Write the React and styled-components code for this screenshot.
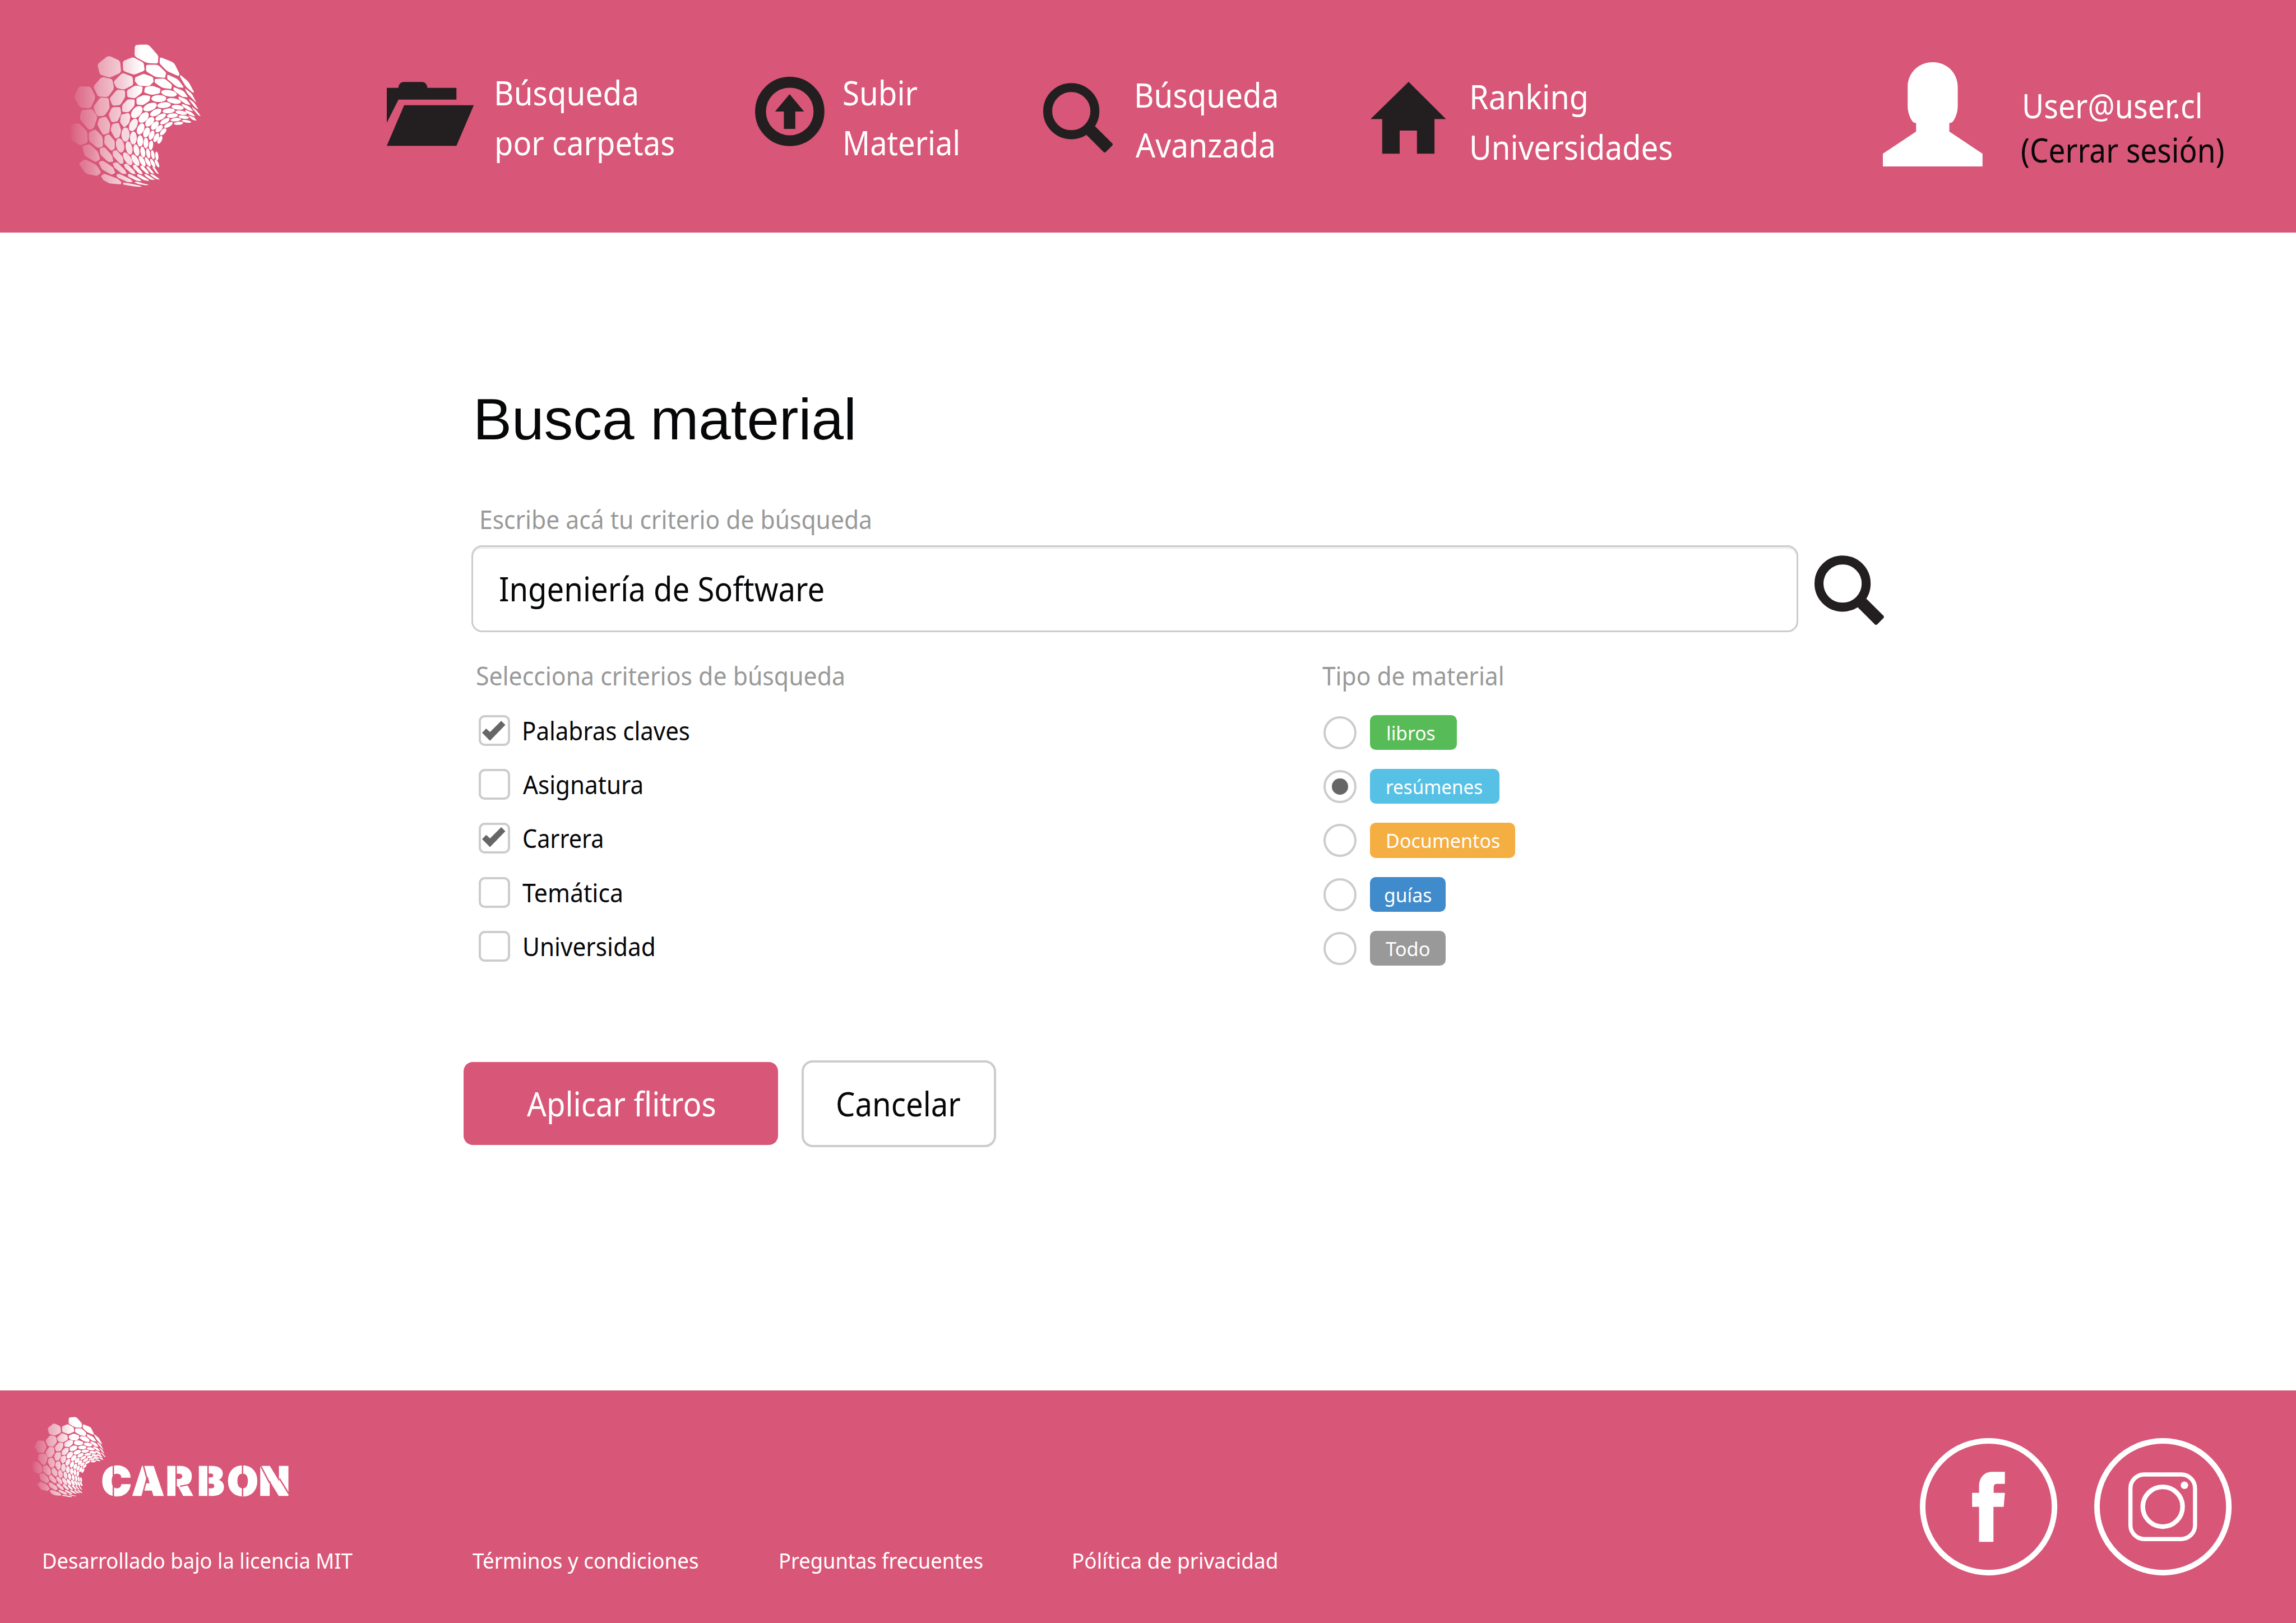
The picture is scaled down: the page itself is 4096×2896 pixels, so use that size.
import React from "react";
import styled, { createGlobalStyle } from "styled-components";

const K = 0.8256;
const u = (n) => `${(n * K).toFixed(2)}px`;

const PINK = "#d85677";
const INK = "#060709";
const ICON = "#231f20";

const GlobalStyle = createGlobalStyle`
  * { box-sizing: border-box; }
  html, body { margin: 0; padding: 0; background: #fff; }
  body { font-family: "Noto Sans", "Open Sans", sans-serif; color: ${INK}; }
`;

/* Condensed text line: $s is the horizontal stretch, $l the side bearing trimmed off. */
const T = styled.span`
  display: block;
  flex: none;
  width: ${(p) => u(p.$w)};
  margin-left: ${(p) => u((p.$dx || 0) - (p.$l || 0))};
  margin-right: ${(p) => u(p.$l || 0)};
  font-family: ${(p) => (p.$arial ? '"Liberation Sans", Arial, sans-serif' : "inherit")};
  font-size: ${(p) => u(p.$size)};
  line-height: ${(p) => u(p.$line)};
  color: ${(p) => p.$color || "inherit"};
  white-space: nowrap;
  transform: scaleX(${(p) => p.$s});
  transform-origin: 0 50%;
`;

const Page = styled.div`
  width: 4096px;
  height: 2896px;
  display: flex;
  flex-direction: column;
  overflow: hidden;
`;
const Header = styled.header`
  flex: none;
  height: ${u(503)};
  background: ${PINK};
  color: #fff;
  display: flex;
  align-items: flex-start;
`;
const Svg = styled.svg`
  display: block;
  flex: none;
  width: ${(p) => u(p.$w)};
  height: ${(p) => u(p.$h)};
  margin-top: ${(p) => u(p.$mt || 0)};
  margin-left: ${(p) => u(p.$ml || 0)};
  overflow: visible;
`;
const NavItem = styled.a`
  display: flex;
  flex: none;
  align-items: flex-start;
  margin-left: ${(p) => u(p.$ml)};
`;
const NavText = styled.div`
  flex: none;
  width: ${(p) => u(p.$w)};
  margin-left: ${(p) => u(p.$ml)};
  margin-top: ${(p) => u(p.$mt)};
`;
const Main = styled.main`
  flex: none;
  height: ${u(2502)};
  display: flex;
  flex-direction: column;
  align-items: flex-start;
`;
const Block = styled.div`
  flex: none;
  padding-left: ${(p) => u(p.$pl)};
  margin-top: ${(p) => u(p.$mt)};
`;
const FieldRow = styled.div`
  display: flex;
  align-items: flex-start;
  margin: ${u(21.2)} 0 0 ${u(1019)};
`;
const Field = styled.div`
  display: flex;
  align-items: center;
  width: ${u(2866.7)};
  height: ${u(188)};
  padding-left: ${u(60)};
  border: ${u(4.8)} solid #ccc;
  border-radius: ${u(23)};
  box-shadow: inset 0 ${u(4)} 0 #eeeff0;
`;
const Columns = styled.div`
  display: flex;
  margin-top: ${u(58.8)};
`;
const Column = styled.section`
  flex: none;
  width: ${(p) => u(p.$w)};
  margin-left: ${(p) => u(p.$ml)};
`;
const Options = styled.div`
  display: flex;
  flex-direction: column;
  gap: ${u(41.35)};
  margin: ${u(49.9)} 0 0 ${(p) => u(p.$ml)};
`;
const Option = styled.div`
  display: flex;
  align-items: flex-start;
  height: ${u(75.3)};
`;
const CheckBox = styled.span`
  flex: none;
  width: ${u(67.6)};
  height: ${u(66.7)};
  margin-right: ${u(28.5)};
  border: ${u(4.9)} solid #ccc;
  border-radius: ${u(13)};
`;
const Radio = styled.span`
  flex: none;
  display: flex;
  align-items: center;
  justify-content: center;
  width: ${u(71.3)};
  height: ${u(71.3)};
  margin: ${u(2.4)} ${u(29.3)} 0 0;
  border: ${u(4.9)} solid #ccc;
  border-radius: 50%;
`;
const Dot = styled.span`
  width: ${u(34.3)};
  height: ${u(34.3)};
  border-radius: 50%;
  background: #666;
`;
const Tag = styled.span`
  flex: none;
  display: flex;
  width: ${(p) => u(p.$w)};
  height: ${u(75.3)};
  padding-left: ${(p) => u(p.$pl)};
  border-radius: ${u(12.5)};
  background: ${(p) => p.$bg};
  color: #fff;
`;
const Buttons = styled.div`
  display: flex;
  align-items: center;
  gap: ${u(49.7)};
  margin: ${u(204)} 0 0 ${u(1002.2)};
`;
const Button = styled.div`
  flex: none;
  display: flex;
  align-items: center;
  width: ${(p) => u(p.$w)};
  height: ${(p) => u(p.$h)};
  padding-left: ${(p) => u(p.$pl)};
  border: ${(p) => (p.$primary ? "0" : `${u(4.9)} solid #ccc`)};
  border-radius: ${(p) => u(p.$primary ? 20 : 24)};
  background: ${(p) => (p.$primary ? PINK : "#fff")};
  color: ${(p) => (p.$primary ? "#fff" : INK)};
`;
const Footer = styled.footer`
  flex: 1;
  display: flex;
  justify-content: space-between;
  background: ${PINK};
  color: #fff;
`;
const Brand = styled.div`
  display: flex;
  height: ${u(213.7)};
  margin: ${u(37.8)} 0 0 ${u(52.1)};
`;
const Links = styled.nav`
  display: flex;
  margin: ${u(85.5)} 0 0 ${u(95.4)};
`;
const Social = styled.div`
  display: flex;
  gap: ${u(79.6)};
  margin: ${u(103)} ${u(138.8)} 0 0;
`;

const POLYS = [
  "515,110 602,106 667,180 664,230 594,228 512,184",
  "342,178 418,212 426,288 352,322 288,302 270,236",
  "436,215 502,188 572,226 578,276 510,304 438,278",
  "678,188 768,224 805,300 796,312 724,280 674,230",
  "588,238 664,238 718,290 710,324 650,318 586,280",
  "808,302 862,348 900,418 888,418 844,378 808,318",
  "725,300 796,334 834,388 790,384 724,330",
  "516,320 572,296 632,318 636,350 606,378 540,374 514,346",
  "434,290 500,316 504,368 444,400 394,388 376,348",
  "300,316 368,332 380,392 340,448 276,444 244,380",
  "152,378 228,380 260,448 228,520 160,516 118,448",
  "644,330 708,328 756,368 750,396 694,388 642,354",
  "764,382 830,408 860,450 820,446 766,404",
  "838,390 884,426 914,484 900,472 852,420",
  "462,406 516,372 566,380 560,420 514,456 466,448",
  "398,400 450,404 452,446 420,500 370,504 350,456",
  "290,450 344,454 352,520 316,570 270,572 244,512",
  "168,532 240,526 272,576 248,650 218,662 156,590",
  "90,628 150,616 206,672 208,742 160,762 88,714",
  "580,384 628,374 682,394 676,424 622,434 574,418",
  "796,442 848,462 878,500 846,494 800,462",
  "864,458 900,484 928,530 902,512 872,474",
  "884,510 914,534 942,572 926,566 890,524",
  "524,456 570,434 614,440 610,472 568,500 526,496",
  "818,490 866,508 894,540 862,534 822,506",
  "432,500 468,462 514,464 512,504 474,546 432,544",
  "840,530 884,548 908,574 876,566 844,546",
  "366,514 420,512 426,556 402,606 364,612 344,562",
  "858,566 898,578 916,602 886,594",
  "424,562 474,550 486,572 478,616 446,646 418,612",
  "284,584 328,574 356,622 348,680 308,694 270,626",
  "368,622 410,614 426,664 414,708 388,718 356,662",
  "216,676 258,656 306,706 308,770 272,778 216,732",
  "318,700 346,688 384,732 384,784 360,796 316,750",
  "172,766 220,752 274,800 290,850 260,870 190,830",
  "286,780 318,772 366,826 376,866 344,870 290,820",
  "370,800 394,790 436,836 442,876 420,882 372,830",
  "150,878 190,850 266,888 296,936 270,960 196,944",
  "278,868 308,860 372,902 388,940 364,952 300,916",
  "370,876 400,870 450,920 462,946 434,946 382,906",
  "442,884 462,878 510,926 520,948 494,944 450,906",
  "500,888 518,886 558,930 566,948 542,944 506,910",
  "550,892 566,892 602,932 606,948 588,942 552,908",
  "590,896 604,898 636,938 638,946 620,940 592,908",
  "626,900 642,904 668,942 668,948 650,936",
  "294,960 314,944 400,976 428,998 424,1014 350,1008 310,986",
  "394,952 412,944 486,980 502,998 470,1000 402,970",
  "468,948 484,946 546,980 560,994 526,990 472,964",
  "528,948 544,948 600,982 608,992 572,986 532,962",
  "576,946 590,948 636,978 644,986 614,982 580,958",
  "614,946 634,950 668,974 676,984 650,978 618,956",
  "438,1002 462,1004 548,1022 560,1030 520,1028 440,1016",
  "514,996 540,998 566,1008 606,1016 590,1020 540,1012 516,1004",
];
const OVALS = [
  [736, 423, 51, 21, 10], [670, 457, 48, 23, 0], [768, 473, 46, 17, 10], [613, 512, 46, 24, -22],
  [704, 500, 44, 19, -5], [792, 514, 40, 15, 8], [527, 545, 46, 29, -48], [650, 548, 40, 20, -27],
  [734, 537, 40, 16, -5], [815, 549, 38, 13, 10], [572, 580, 41, 25, -48], [682, 577, 38, 17, -28],
  [758, 568, 36, 14, -5], [831, 578, 34, 11, 8], [849, 605, 31, 8, 10], [611, 608, 37, 22, -48],
  [709, 604, 34, 15, -30], [780, 594, 34, 11, -6], [798, 618, 30, 10, -6], [732, 628, 32, 13, -30],
  [505, 628, 43, 25, -65], [644, 632, 33, 19, -50], [552, 654, 38, 22, -68], [672, 653, 30, 16, -45],
  [698, 673, 28, 14, -48], [454, 691, 27, 46, 0], [590, 677, 34, 20, -70], [653, 711, 31, 15, -65],
  [677, 725, 27, 13, -65], [505, 713, 22, 42, 0], [623, 695, 32, 16, -68], [549, 732, 19, 37, 0],
  [586, 745, 16, 35, 0], [619, 760, 14, 31, 5], [419, 761, 26, 47, -12], [477, 778, 21, 44, -12],
  [525, 792, 18, 39, -12], [566, 804, 15, 36, -10], [601, 813, 13, 33, -10], [631, 822, 11, 30, -10],
  [657, 830, 10, 29, -6], [468, 848, 21, 47, -32], [518, 857, 18, 42, -31], [562, 863, 15, 38, -28],
  [598, 868, 12, 34, -28], [630, 876, 11, 31, -26], [658, 878, 10, 28, -26],
];
function roundedCell(points, t = 0.2) {
  const p = points.split(" ").map((q) => q.split(",").map(Number));
  const mix = (a, b, k) => [(a[0] + (b[0] - a[0]) * k).toFixed(1), (a[1] + (b[1] - a[1]) * k).toFixed(1)];
  return (
    p.map((v, i) => {
      const prev = p[(i + p.length - 1) % p.length];
      const next = p[(i + 1) % p.length];
      return `${i ? "L" : "M"}${mix(v, prev, t)} Q${v} ${mix(v, next, t)}`;
    }).join(" ") + "Z"
  );
}
function ShellLogo({ id, w, h, mt, ml }) {
  return (
    <Svg viewBox="0 0 1080 1140" $w={w} $h={h} $mt={mt} $ml={ml}>
      <defs>
        <linearGradient id={id} gradientUnits="userSpaceOnUse" x1="90" y1="0" x2="560" y2="0">
          <stop offset="0" stopColor="#fff" stopOpacity="0" />
          <stop offset="0.08" stopColor="#fff" stopOpacity="0.12" />
          <stop offset="0.33" stopColor="#fff" stopOpacity="0.33" />
          <stop offset="0.42" stopColor="#fff" stopOpacity="0.47" />
          <stop offset="0.72" stopColor="#fff" stopOpacity="0.7" />
          <stop offset="0.88" stopColor="#fff" stopOpacity="0.88" />
          <stop offset="1" stopColor="#fff" />
        </linearGradient>
      </defs>
      <g fill={`url(#${id})`}>
        {POLYS.map((p) => <path key={p} d={roundedCell(p)} />)}
      </g>
      {OVALS.map(([x, y, rx, ry, a]) => {
        const o = Math.min(1, x < 560 ? 0.66 + ((x - 419) / 100) * 0.28 : 1);
        return <ellipse key={`${x}-${y}`} cx={x} cy={y} rx={rx} ry={ry} transform={`rotate(${a} ${x} ${y})`} fill="#fff" fillOpacity={o} />;
      })}
    </Svg>
  );
}

const SearchIcon = (p) => (
  <Svg viewBox="0 0 150.5 150.5" $w={150.5} $h={150.5} {...p}>
    <circle cx="60.7" cy="60.9" r="51" fill="none" stroke={ICON} strokeWidth="19.4" />
    <path d="M112 93.7L149.2 130.6Q151.2 133 149.2 135.4L135.4 149.4Q133 151.2 130.6 149.2L93.3 112Z" fill={ICON} />
  </Svg>
);

const Wordmark = (p) => (
  <Svg viewBox="0 0 400 65" $w={400} $h={65} {...p}>
    <text x="-3.4 63 136.3 204.5 268.2 337.1" y="63.7" fill="#fff" stroke="#fff" strokeWidth="3" fontFamily="Inter, sans-serif" fontWeight="900" fontSize="85.5">CARBON</text>
    <g fill="none" stroke={PINK} strokeWidth="3">
      <path d="M22 -2V67M157.8 -2V67M226.7 -2V67M301.3 -2V67" />
      <path d="M86.5 -2L94.5 28L84 67M166 45L186 41" />
      <path d="M340 0L360 38M381 28L401 61" />
    </g>
  </Svg>
);

const NAV = { $size: 71.9, $line: 108.2 };
const SMALL = { $size: 55.6, $line: 70 };
const OPT = { $size: 55.6, $line: 67.2 };
const TAG = { $size: 42.8, $line: 77 };
const LINK = { $size: 47.2, $line: 60 };

const CHECKS = [
  { name: "Palabras claves", w: 356.5, s: 0.915, l: 4.8, dx: 1.5, tick: true },
  { name: "Asignatura", w: 256.8, s: 0.9189, l: 0.8, dx: 0 },
  { name: "Carrera", w: 170, s: 0.901, l: 2.3, dx: 0, tick: true, tickShift: -2.7 },
  { name: "Temática", w: 214, s: 0.9321, l: 0.5, dx: -2 },
  { name: "Universidad", w: 282.5, s: 0.922, l: 4.4, dx: 1.9 },
];
const TAGS = [
  { name: "libros", w: 101.3, s: 0.9512, l: 3.2, pl: 38.2, width: 188.3, bg: "#57bb57" },
  { name: "resúmenes", w: 205, s: 0.9402, l: 3.1, pl: 37.5, width: 279.7, bg: "#56c1e5", on: true },
  { name: "Documentos", w: 242, s: 0.9649, l: 3.9, pl: 38, width: 313.3, bg: "#f4ae42" },
  { name: "guías", w: 99.7, s: 0.9537, l: 1.9, pl: 32, width: 163.3, bg: "#3f8bcb" },
  { name: "Todo", w: 94.7, s: 0.9754, l: 0.4, pl: 34.7, width: 163.3, bg: "#999" },
];

export default function App() {
  return (
    <Page>
      <GlobalStyle />
      <Header>
        <ShellLogo id="shellTop" w={360} h={380} mt={60} ml={120} />
        <NavItem $ml={356}>
          <Svg viewBox="0 0 188 138.5" $w={188} $h={138.5} $mt={177} fill={ICON}>
            <path d="M0 13H25.2C25.5 6 29.5 .3 37.5 .3H75.5C83.5 .3 87.2 6 87.7 13H150.5V38.4H25.3L0 88.5Z" />
            <path d="M37.5 50.6H188L150.5 138.4H0Z" />
          </Svg>
          <NavText $w={383} $ml={49.5} $mt={146.3}>
            <T {...NAV} $w={303} $s={0.9243} $l={5.9}>Búsqueda</T>
            <T {...NAV} $w={382.5} $s={0.9161} $l={5.1}>por carpetas</T>
          </NavText>
        </NavItem>
        <NavItem $ml={175.5}>
          <Svg viewBox="0 0 150 150" $w={150} $h={150} $mt={166}>
            <circle cx="75" cy="75" r="63.2" fill="none" stroke={ICON} strokeWidth="23.4" />
            <path d="M74.6 37.5L106 75H87V112.7H62.3V75H43.2Z" fill={ICON} />
          </Svg>
          <NavText $w={246.5} $ml={42} $mt={146.3}>
            <T {...NAV} $w={159} $s={0.9217} $l={2.9}>Subir</T>
            <T {...NAV} $w={244} $s={0.9126} $l={6} $dx={2.3}>Material</T>
          </NavText>
        </NavItem>
        <NavItem $ml={183.8}>
          <SearchIcon $mt={179} />
          <NavText $w={305} $ml={49.4} $mt={151.5}>
            <T {...NAV} $w={302.2} $s={0.9223} $l={6} $dx={2.8}>Búsqueda</T>
            <T {...NAV} $w={297.7} $s={0.9291} $l={0.6}>Avanzada</T>
          </NavText>
        </NavItem>
        <NavItem $ml={203}>
          <Svg viewBox="0 0 163 155.5" $w={163} $h={155.5} $mt={177} fill={ICON}>
            <path d="M82.3 0L163 80.4H138.2V155.3H100.3V105.3H63V155.3H25.2V80.4H0Z" />
          </Svg>
          <NavText $w={432.5} $ml={55} $mt={155.3}>
            <T {...NAV} $w={246.7} $s={0.9384} $l={5.9}>Ranking</T>
            <T {...NAV} $w={432.3} $s={0.9189} $l={5}>Universidades</T>
          </NavText>
        </NavItem>
        <NavItem $ml={456.2}>
          <Svg viewBox="0 0 215.3 225.3" $w={215.3} $h={225.3} $mt={134} fill="#fff">
            <path d="M107.7 0C138 0 161.8 23 161.8 53.3V95.3C161.8 108 157 121 150.5 129C148.5 131 146.5 131.3 143.6 131.3V150L215.3 197.7V225.3H0V197.7L71.8 150V131.3C69 131.3 67 131 65 129C58.5 121 53.6 108 53.6 95.3V53.3C53.6 23 77.5 0 107.7 0Z" />
          </Svg>
          <NavText $w={440} $ml={84.7} $mt={179.9}>
            <T $size={71.9} $line={95.8} $w={381} $s={0.9047} $l={5.1} $dx={5}>User@user.cl</T>
            <T $size={71.9} $line={95.8} $w={436} $s={0.8953} $l={2} $color={INK}>(Cerrar sesión)</T>
          </NavText>
        </NavItem>
      </Header>

      <Main>
        <Block $pl={1032.3} $mt={333.7}>
          <T $arial $size={124.7} $line={140} $w={810.6} $s={1.0047} $l={9.8}>Busca material</T>
        </Block>
        <Block $pl={1040} $mt={110.8}>
          <T {...SMALL} $w={840.5} $s={0.9279} $l={4.8} $color="#999">Escribe acá tu criterio de búsqueda</T>
        </Block>
        <FieldRow>
          <Field>
            <T $size={71.9} $line={108} $w={697.7} $s={0.9175} $l={4.4}>Ingeniería de Software</T>
          </Field>
          <SearchIcon $mt={21.4} $ml={35.6} />
        </FieldRow>
        <Columns>
          <Column $w={1826.3} $ml={1031}>
            <T {...SMALL} $w={792} $s={0.9317} $l={2.4} $color="#999">Selecciona criterios de búsqueda</T>
            <Options $ml={4}>
              {CHECKS.map(({ name, w, s, l, dx, tick, tickShift = 0 }) => (
                <Option key={name}>
                  <CheckBox>
                    {tick && (
                      <Svg viewBox="4.4 4.4 58.8 57.9" $w={58.8} $h={57.9}>
                        <path transform={`translate(0 ${tickShift})`} d="M6.8 37.7L15.7 28.5L23.9 36.3L48.2 11.9L57.1 20.7L23.9 55.1Z" fill="#666" />
                      </Svg>
                    )}
                  </CheckBox>
                  <T {...OPT} $w={w} $s={s} $l={l} $dx={dx}>{name}</T>
                </Option>
              ))}
            </Options>
          </Column>
          <Column $w={500} $ml={0}>
            <T {...SMALL} $w={389.7} $s={0.9255} $l={0.5} $color="#999">Tipo de material</T>
            <Options $ml={2.4}>
              {TAGS.map(({ name, w, s, l, pl, width, bg, on }) => (
                <Option key={name}>
                  <Radio>{on && <Dot />}</Radio>
                  <Tag $w={width} $pl={pl} $bg={bg}>
                    <T {...TAG} $w={w} $s={s} $l={l}>{name}</T>
                  </Tag>
                </Option>
              ))}
            </Options>
          </Column>
        </Columns>
        <Buttons>
          <Button $primary $w={679.6} $h={179.7} $pl={137}>
            <T $size={71.9} $line={108} $w={406.3} $s={0.9203} $l={0.9}>Aplicar flitros</T>
          </Button>
          <Button $w={421} $h={188} $pl={73}>
            <T $size={71.9} $line={108} $w={266.3} $s={0.9183} $l={3.1}>Cancelar</T>
          </Button>
        </Buttons>
      </Main>

      <Footer>
        <div>
          <Brand>
            <ShellLogo id="shellBottom" w={202.5} h={213.7} />
            <Wordmark $mt={124.2} $ml={-31.6} />
          </Brand>
          <Links>
            <T {...LINK} $w={666.3} $s={0.9339} $l={4.1}>Desarrollado bajo la licencia MIT</T>
            <T {...LINK} $w={487} $s={0.9443} $l={0.5} $dx={260.3}>Términos y condiciones</T>
            <T {...LINK} $w={438.5} $s={0.9312} $l={4.1} $dx={178}>Preguntas frecuentes</T>
            <T {...LINK} $w={443} $s={0.9485} $l={4.2} $dx={194.5}>Pólítica de privacidad</T>
          </Links>
        </div>
        <Social>
          <Svg viewBox="0 0 297 297" $w={297} $h={297} fill="none">
            <circle cx="148.5" cy="148.5" r="142.5" stroke="#fff" strokeWidth="12" />
            <path d="M112.9 118.3H127.9V105C128 85 139 73 156.5 73H183.7V99H167C161 99 159.5 102 159.5 108V118.3H183.7L181.2 148.7H159V224.3H127.9V148.7H112.9Z" fill="#fff" />
          </Svg>
          <Svg viewBox="0 0 297 297" $w={297} $h={297} fill="none" stroke="#fff">
            <circle cx="148.5" cy="148.5" r="142.5" strokeWidth="12" />
            <rect x="78.3" y="78.7" width="139.6" height="139.6" rx="30" strokeWidth="9" />
            <circle cx="148" cy="148.5" r="43" strokeWidth="10" />
            <circle cx="195" cy="102" r="8" fill="#fff" stroke="none" />
          </Svg>
        </Social>
      </Footer>
    </Page>
  );
}
